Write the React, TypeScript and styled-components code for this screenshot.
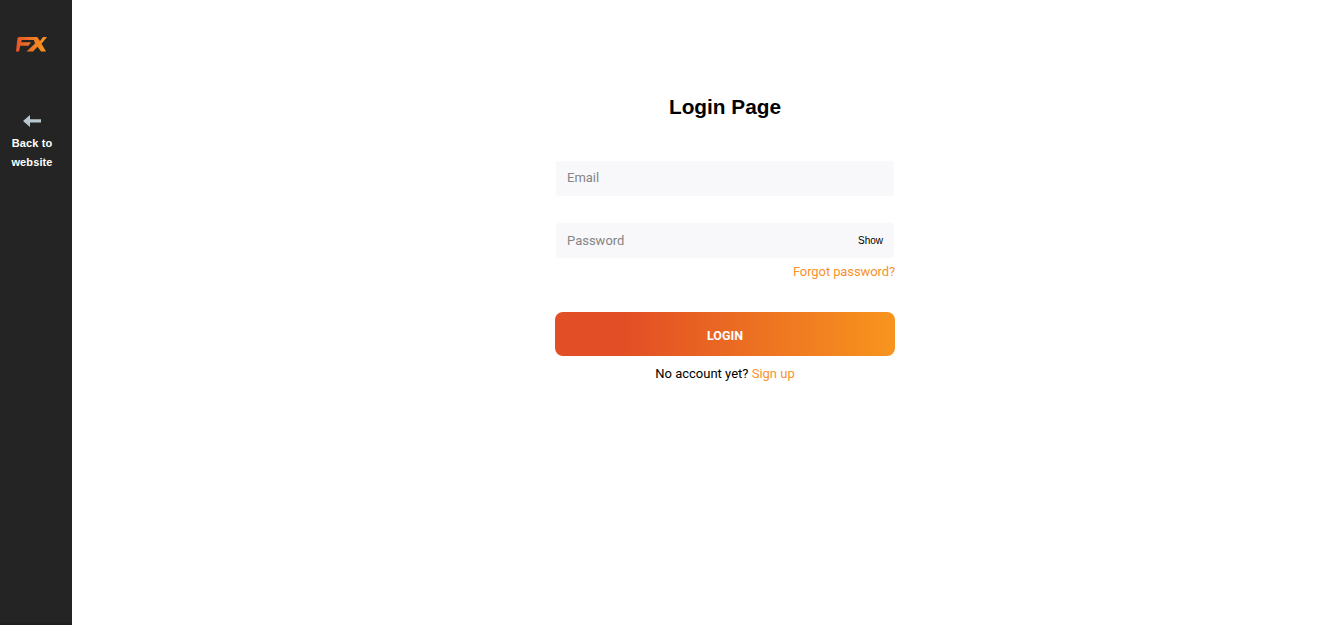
import React, { useState } from "react";
import styled, { createGlobalStyle } from "styled-components";

const GlobalStyle = createGlobalStyle`
  * {
    box-sizing: border-box;
  }
  body {
    margin: 0;
    background: #fff;
    font-family: Roboto, "Liberation Sans", sans-serif;
  }
`;
const PageStyle = styled.div`
  display: flex;
  height: 100vh;
  overflow: hidden;
`;
const Sidebar = styled.aside`
  width: 72px;
  flex-shrink: 0;
  display: flex;
  flex-direction: column;
  background: #242424;
  border-bottom: 2px solid #231f20;
`;
const Logo = styled.svg`
  display: block;
  margin: 36px 0 0 15px;
`;
const BackLink = styled.a`
  display: flex;
  flex-direction: column;
  align-items: center;
  width: 64px;
  margin-top: 62px;
  color: #fff;
  font: bold 11px/19px "Liberation Sans", Arial, sans-serif;
  letter-spacing: 0.1px;
  text-align: center;
  text-decoration: none;
  cursor: pointer;
`;
const Arrow = styled.svg`
  display: block;
  margin-bottom: 7px;
`;
const Main = styled.main`
  flex: 1;
  display: flex;
  justify-content: center;
  padding: 94px 0 0 59px;
`;
const FormStyle = styled.form`
  width: 340px;
  display: flex;
  flex-direction: column;
`;
const Title = styled.h1`
  margin: 0 0 41px;
  font: bold 20.8px/26px "Liberation Sans", Arial, sans-serif;
  text-align: center;
  color: #000;
`;
const FieldStyle = styled.div`
  display: flex;
  align-items: center;
  height: 35px;
  margin: 0 1px 27px;
  padding: 0 11px;
  border-radius: 3px;
  background: #f8f8fb;
  &:last-of-type {
    margin-bottom: 0;
  }
`;
const Input = styled.input`
  flex: 1;
  min-width: 0;
  height: 16px;
  padding: 0;
  border: none;
  outline: none;
  background: transparent;
  font: 13px/16px Roboto, sans-serif;
  color: #222;
  &::placeholder {
    color: #858585;
    opacity: 1;
  }
  &[type="email"] {
    margin-bottom: 1px;
  }
`;
const ShowButton = styled.button`
  padding: 0;
  border: none;
  background: none;
  font: 10px/12px "Liberation Sans", Arial, sans-serif;
  color: #000;
  cursor: pointer;
`;
const OrangeLink = styled.a`
  color: #f7922c;
  text-decoration: none;
  cursor: pointer;
`;
const ForgotLink = styled(OrangeLink)`
  align-self: flex-end;
  margin: 4px 0 30px;
  font-size: 13px;
  line-height: 20px;
  letter-spacing: -0.1px;
`;
const LoginButton = styled.button`
  height: 44px;
  padding: 4px 0 0;
  border: none;
  border-radius: 8px;
  background: linear-gradient(90deg, #e24e25 20%, #f7931e 98%);
  color: #fff;
  font: bold 12.5px/16px Roboto, sans-serif;
  cursor: pointer;
`;
const SignUpText = styled.p`
  margin: 8px 0 0;
  font-size: 13px;
  line-height: 20px;
  text-align: center;
  color: #000;
`;

const App: React.FC = () => {
  const [visible, setVisible] = useState(false);
  return (
    <PageStyle>
      <GlobalStyle />
      <Sidebar>
        <Logo width="32" height="17" viewBox="0 0 32 17">
          <defs>
            <linearGradient
              id="logo"
              gradientUnits="userSpaceOnUse"
              x1="2"
              y1="0"
              x2="30"
              y2="0"
            >
              <stop offset="0" stopColor="#e8562a" />
              <stop offset="1" stopColor="#f7941e" />
            </linearGradient>
          </defs>
          <g fill="url(#logo)">
            <path d="M3.5 1H18.5L20.5 4H6.8L6.2 6.3H16L13.5 9.8H5.2L4 15.5H1L2.4 2.5Z" />
            <path d="M18 1H22.2L25 5L28 1H32L26.5 7.7L31 15.5H26L22.5 10.7L18 15.5H11.5L20 7.5Z" />
          </g>
        </Logo>
        <BackLink>
          <Arrow width="18" height="12" viewBox="0 0 18 12">
            <path d="M0 6L7 0V4.2H18V7.6H7V12Z" fill="#b9c8d0" />
          </Arrow>
          Back to
          <br />
          website
        </BackLink>
      </Sidebar>
      <Main>
        <FormStyle onSubmit={(e) => e.preventDefault()}>
          <Title>Login Page</Title>
          <FieldStyle>
            <Input type="email" placeholder="Email" />
          </FieldStyle>
          <FieldStyle>
            <Input
              type={visible ? "text" : "password"}
              placeholder="Password"
            />
            <ShowButton type="button" onClick={() => setVisible(!visible)}>
              {visible ? "Hide" : "Show"}
            </ShowButton>
          </FieldStyle>
          <ForgotLink>Forgot password?</ForgotLink>
          <LoginButton type="submit">LOGIN</LoginButton>
          <SignUpText>
            No account yet? <OrangeLink>Sign up</OrangeLink>
          </SignUpText>
        </FormStyle>
      </Main>
    </PageStyle>
  );
};

export default App;
